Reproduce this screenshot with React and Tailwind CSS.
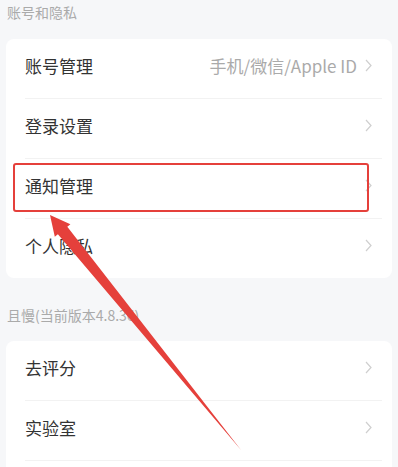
const font = { fontFamily: '"Noto Sans CJK SC", "Noto Sans", sans-serif' };

function Chevron() {
    return (
        <svg width="7" height="13" viewBox="0 0 7 13" className="shrink-0">
            <polyline points="1,1 6,6.5 1,12" fill="none" stroke="#cfcfcf" strokeWidth="1.2" />
        </svg>
    );
}

function Row({ label, value, divider = true }) {
    return (
        <div>
            <div className="flex h-[59px] items-center justify-between pb-[6px] pl-[19px] pr-[20px]">
                <span className="text-[17px] text-[#333]">{label}</span>
                <div className="flex items-center gap-[8px]">
                    {value && <span className="text-[17px] text-[#aaa]">{value}</span>}
                    <Chevron />
                </div>
            </div>
            {divider && <div className="ml-[19px] mr-[10px] h-px bg-[#f2f2f2]" />}
        </div>
    );
}

export default function App() {
    return (
        <div className="relative h-[467px] w-full overflow-hidden bg-[#f6f7f9]" style={font}>
            <div className="h-[39px] px-[7px] pt-[2px] text-[14px] leading-[20px] text-[#aaa]">账号和隐私</div>
            <div className="mx-[6px] rounded-[8px] bg-white">
                <Row label="账号管理" value="手机/微信/Apple ID" />
                <Row label="登录设置" />
                <Row label="通知管理" />
                <Row label="个人隐私" divider={false} />
            </div>
            <div className="h-[63px] px-[7px] pt-[27px] text-[14px] leading-[20px] text-[#aaa]">且慢(当前版本4.8.36)</div>
            <div className="mx-[6px] rounded-[8px] bg-white">
                <Row label="去评分" />
                <Row label="实验室" />
                <div className="h-[40px]" />
            </div>

            {/* highlight + arrow overlay */}
            <div className="pointer-events-none absolute left-[13px] top-[163px] h-[49px] w-[356px] rounded-[3px] border-[2.5px] border-[#e5403b]" />
            <svg className="pointer-events-none absolute inset-0" width="398" height="467" viewBox="0 0 398 467">
                <polygon
                    points="50,215 70.4,224.2 67.3,226.7 241,450 57.9,234.3 54.8,236.8"
                    fill="#e5403b"
                />
            </svg>
        </div>
    );
}
